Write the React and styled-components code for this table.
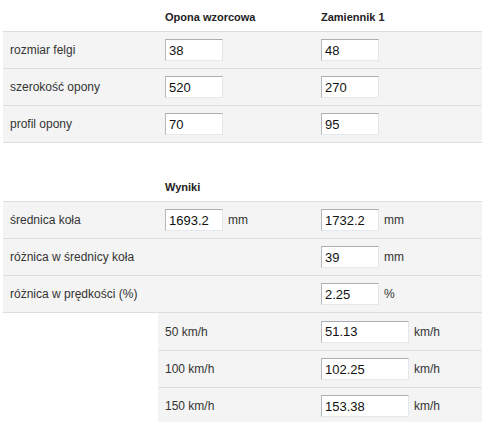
import React from "react";
import styled, { createGlobalStyle } from "styled-components";

const Global = createGlobalStyle`
  html, body { margin: 0; padding: 0; background: #fff; }
  body { font-family: "Liberation Sans", Arial, sans-serif; font-size: 12px; color: #333; }
`;

const Page = styled.div`
  padding-left: 3px;
  width: 479px;
`;

const Section = styled.section`
  display: flex;
  flex-direction: column;
  margin-top: ${(p) => p.$top || 0}px;
`;

const HeadRow = styled.div`
  display: grid;
  grid-template-columns: 155px 156px 1fr;
  height: 31px;
`;

const HeadCell = styled.div`
  padding: 11px 0 0 7px;
  font-family: "Liberation Sans", Arial, sans-serif;
  font-weight: bold;
  font-size: 11px;
  color: #222;
`;

const Row = styled.div`
  display: grid;
  grid-template-columns: ${(p) => (p.$indent ? "156px 1fr" : "155px 156px 1fr")};
  margin-left: ${(p) => (p.$indent ? 155 : 0)}px;
  height: ${(p) => (p.$flush ? 37 : 36)}px;
  background: #f4f4f4;
  border-top: ${(p) => (p.$flush ? "none" : "1px solid #dedede")};
  border-bottom: ${(p) => (p.$closed ? "1px solid #dedede" : "none")};
`;

const Cell = styled.div`
  display: flex;
  align-items: center;
  padding-left: 7px;
  white-space: nowrap;
`;

const Field = styled.input`
  box-sizing: border-box;
  width: ${(p) => (p.$wide ? 88 : 58)}px;
  height: 22px;
  padding: 0 3px;
  margin: 0;
  border: 1px solid;
  border-color: #abadb3 #e3e6ea #e3e9ef #b5b8bd;
  background: #fff;
  font-family: "Liberation Sans", Arial, sans-serif;
  font-size: 13px;
  color: #111;
  outline: none;
`;

const Unit = styled.span`
  margin-left: 5px;
  font-size: 12px;
  color: #333;
`;

const inputs = [
  { label: "rozmiar felgi", a: "38", b: "48" },
  { label: "szerokość opony", a: "520", b: "270" },
  { label: "profil opony", a: "70", b: "95" },
];

const speeds = [
  { label: "50 km/h", v: "51.13" },
  { label: "100 km/h", v: "102.25" },
  { label: "150 km/h", v: "153.38" },
];

export default function App() {
  return (
    <Page>
      <Global />
      <Section>
        <HeadRow>
          <HeadCell />
          <HeadCell>Opona wzorcowa</HeadCell>
          <HeadCell>Zamiennik 1</HeadCell>
        </HeadRow>
        {inputs.map((r, i) => (
          <Row key={r.label} $closed={i === inputs.length - 1}>
            <Cell>{r.label}</Cell>
            <Cell><Field defaultValue={r.a} /></Cell>
            <Cell><Field defaultValue={r.b} /></Cell>
          </Row>
        ))}
      </Section>
      <Section $top={27}>
        <HeadRow>
          <HeadCell />
          <HeadCell>Wyniki</HeadCell>
          <HeadCell />
        </HeadRow>
        <Row>
          <Cell>średnica koła</Cell>
          <Cell><Field defaultValue="1693.2" /><Unit>mm</Unit></Cell>
          <Cell><Field defaultValue="1732.2" /><Unit>mm</Unit></Cell>
        </Row>
        <Row>
          <Cell>różnica w średnicy koła</Cell>
          <Cell />
          <Cell><Field defaultValue="39" /><Unit>mm</Unit></Cell>
        </Row>
        <Row $closed>
          <Cell>różnica w prędkości (%)</Cell>
          <Cell />
          <Cell><Field defaultValue="2.25" /><Unit>%</Unit></Cell>
        </Row>
        {speeds.map((s, i) => (
          <Row $indent $flush={i === 0} key={s.label}>
            <Cell>{s.label}</Cell>
            <Cell><Field $wide defaultValue={s.v} /><Unit>km/h</Unit></Cell>
          </Row>
        ))}
      </Section>
    </Page>
  );
}
